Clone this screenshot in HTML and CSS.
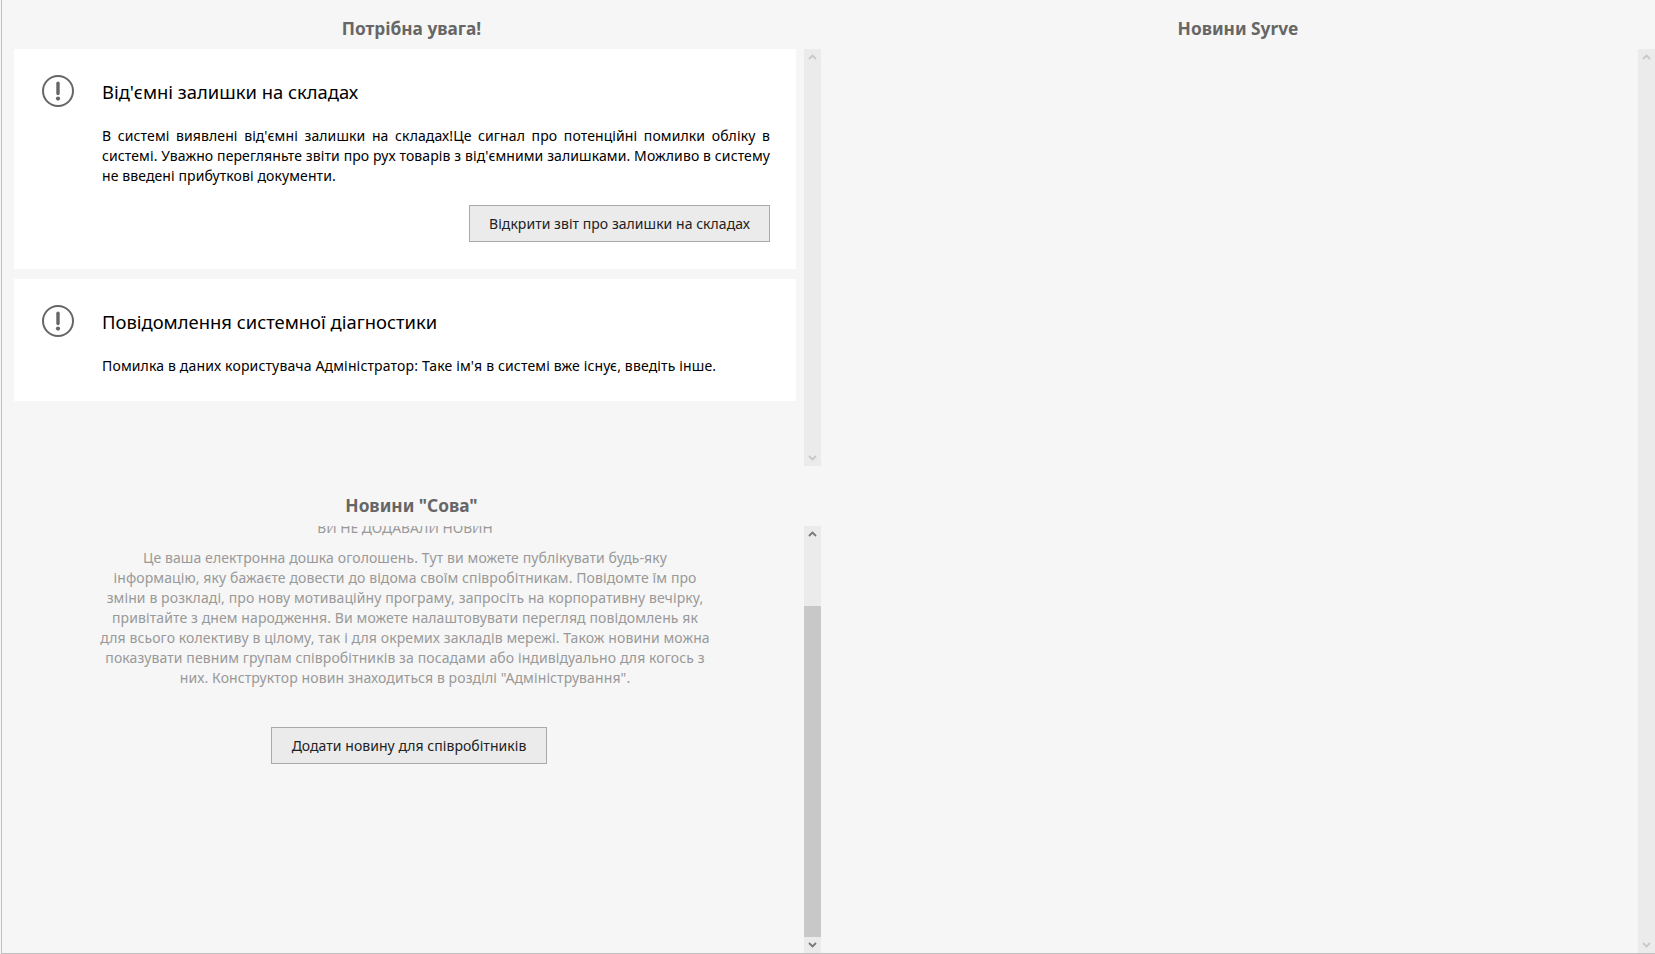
FILE: index.html
```html
<!DOCTYPE html>
<html lang="uk">
<head>
<meta charset="utf-8">
<title>Потрібна увага!</title>
<link rel="stylesheet" href="styles.css">
</head>
<body>
<div class="page">
  <div class="left">
    <h2 class="title">Потрібна увага!</h2>
    <div class="pane pane-alerts">
      <div class="pane-body">
        <section class="card card-stock">
          <svg class="icon" viewBox="0 0 32 32" aria-hidden="true"><circle cx="16" cy="16" r="15" fill="none" stroke="#666" stroke-width="2"/><path d="M16 8.3V18.5" stroke="#666" stroke-width="3.4" stroke-linecap="round"/><circle cx="16" cy="23.6" r="2.1" fill="#666"/></svg>
          <div class="card-main">
            <h3 class="card-title">Від'ємні залишки на складах</h3>
            <p class="card-text card-just">В системі виявлені від'ємні залишки на складах!Це сигнал про потенційні помилки обліку в системі. Уважно перегляньте звіти про рух товарів з від'ємними залишками. Можливо в систему не введені прибуткові документи.</p>
            <div class="actions"><button class="btn btn-report">Відкрити звіт про залишки на складах</button></div>
          </div>
        </section>
        <section class="card card-diag">
          <svg class="icon" viewBox="0 0 32 32" aria-hidden="true"><circle cx="16" cy="16" r="15" fill="none" stroke="#666" stroke-width="2"/><path d="M16 8.3V18.5" stroke="#666" stroke-width="3.4" stroke-linecap="round"/><circle cx="16" cy="23.6" r="2.1" fill="#666"/></svg>
          <div class="card-main">
            <h3 class="card-title">Повідомлення системної діагностики</h3>
            <p class="card-text card-wide">Помилка в даних користувача Адміністратор: Таке ім'я в системі вже існує, введіть інше.</p>
          </div>
        </section>
      </div>
      <div class="scrollbar">
        <svg class="arrow off" viewBox="0 0 9 6"><path d="M1 5l3.5-3.5L8 5" fill="none" stroke-width="1.8"/></svg>
        <div class="track"></div>
        <svg class="arrow off" viewBox="0 0 9 6"><path d="M1 1l3.5 3.5L8 1" fill="none" stroke-width="1.8"/></svg>
      </div>
    </div>
    <h2 class="title title-news">Новини "Сова"</h2>
    <div class="pane pane-news">
      <div class="pane-body news-body">
        <div class="news-inner">
          <div class="news-head">ВИ НЕ ДОДАВАЛИ НОВИН</div>
          <p class="news-text">Це ваша електронна дошка оголошень. Тут ви можете публікувати будь-яку<br>інформацію, яку бажаєте довести до відома своїм співробітникам. Повідомте їм про<br>зміни в розкладі, про нову мотиваційну програму, запросіть на корпоративну вечірку,<br>привітайте з днем народження. Ви можете налаштовувати перегляд повідомлень як<br>для всього колективу в цілому, так і для окремих закладів мережі. Також новини можна<br>показувати певним групам співробітників за посадами або індивідуально для когось з<br>них. Конструктор новин знаходиться в розділі "Адміністрування".</p>
          <button class="btn btn-add">Додати новину для співробітників</button>
        </div>
      </div>
      <div class="scrollbar">
        <svg class="arrow" viewBox="0 0 9 6"><path d="M1 5l3.5-3.5L8 5" fill="none" stroke-width="1.8"/></svg>
        <div class="track track-thumb"><div class="thumb-space"></div><div class="thumb"></div></div>
        <svg class="arrow" viewBox="0 0 9 6"><path d="M1 1l3.5 3.5L8 1" fill="none" stroke-width="1.8"/></svg>
      </div>
    </div>
  </div>
  <div class="right">
    <h2 class="title">Новини Syrve</h2>
    <div class="pane pane-syrve">
      <div class="pane-body"></div>
      <div class="scrollbar">
        <svg class="arrow off" viewBox="0 0 9 6"><path d="M1 5l3.5-3.5L8 5" fill="none" stroke-width="1.8"/></svg>
        <div class="track"></div>
        <svg class="arrow off" viewBox="0 0 9 6"><path d="M1 1l3.5 3.5L8 1" fill="none" stroke-width="1.8"/></svg>
      </div>
    </div>
  </div>
</div>
</body>
</html>
```

FILE: styles.css
```css
* { box-sizing: border-box; }
html, body { margin: 0; height: 100%; overflow: hidden; }
body {
  background: #f6f6f6;
  font-family: "Noto Sans", "Open Sans", sans-serif;
  font-size: 14px;
  letter-spacing: 0.1px;
  color: #000;
}
.page {
  display: flex;
  width: 1654px;
  height: 954px;
  border-left: 1px solid #bfbfbf;
  border-bottom: 1px solid #bfbfbf;
  margin-left: 1px;
}
.left { width: 819px; display: flex; flex-direction: column; }
.right { flex: 1; display: flex; flex-direction: column; min-width: 0; }
.title {
  margin: 0;
  height: 49px;
  line-height: 58px;
  text-align: center;
  font-size: 17.3px;
  font-weight: 700;
  letter-spacing: 0;
  color: #666;
}
.title-news { height: 60px; line-height: 80px; }
.pane { display: flex; min-height: 0; }
.pane-alerts { height: 417px; }
.pane-news { flex: 1; }
.pane-syrve { flex: 1; }
.pane-body { flex: 1; min-width: 0; }
.card {
  display: flex;
  background: #fff;
  margin: 0 8px 10px 12px;
  padding: 26px 26px 0 28px;
}
.card-stock { height: 220px; }
.card-diag { height: 122px; }
.icon { width: 32px; height: 32px; flex: none; }
.card-main { flex: 1; margin-left: 28px; min-width: 0; }
.card-title {
  margin: 0;
  font-size: 18.4px;
  font-weight: 400;
  line-height: 34px;
  letter-spacing: 0;
}
.card-text {
  margin: 17px 0 0;
  line-height: 20px;
}
.card-just { text-align: justify; }
.card-wide { letter-spacing: 0.15px; }
.actions { display: flex; justify-content: flex-end; margin-top: 19px; }
.btn {
  height: 37px;
  border: 1px solid #aaa;
  background: #ebebeb;
  font: inherit;
  letter-spacing: 0.04px;
  color: #222;
  padding: 0;
}
.btn-report { width: 301px; }
.btn-add { width: 276px; display: block; margin: 39px 0 0 265px; }
.news-body { overflow: hidden; }
.news-inner { margin: -8px 0 0; text-align: center; padding: 0 0 0 4px; }
.news-head { color: #999; line-height: 20px; letter-spacing: 0; font-size: 13.8px; }
.news-text { margin: 10px 0 0; line-height: 20px; color: #999; white-space: nowrap; }
.scrollbar {
  width: 17px;
  flex: none;
  background: #ebebeb;
  display: flex;
  flex-direction: column;
  align-items: center;
}
.arrow { width: 9px; height: 6px; flex: none; margin: 5px 0; stroke: #777; }
.arrow.off { stroke: #c8c8c8; }
.track { flex: 1; width: 100%; display: flex; flex-direction: column; }
.thumb-space { height: 64px; }
.thumb { flex: 1; background: #c8c8c8; }
```
